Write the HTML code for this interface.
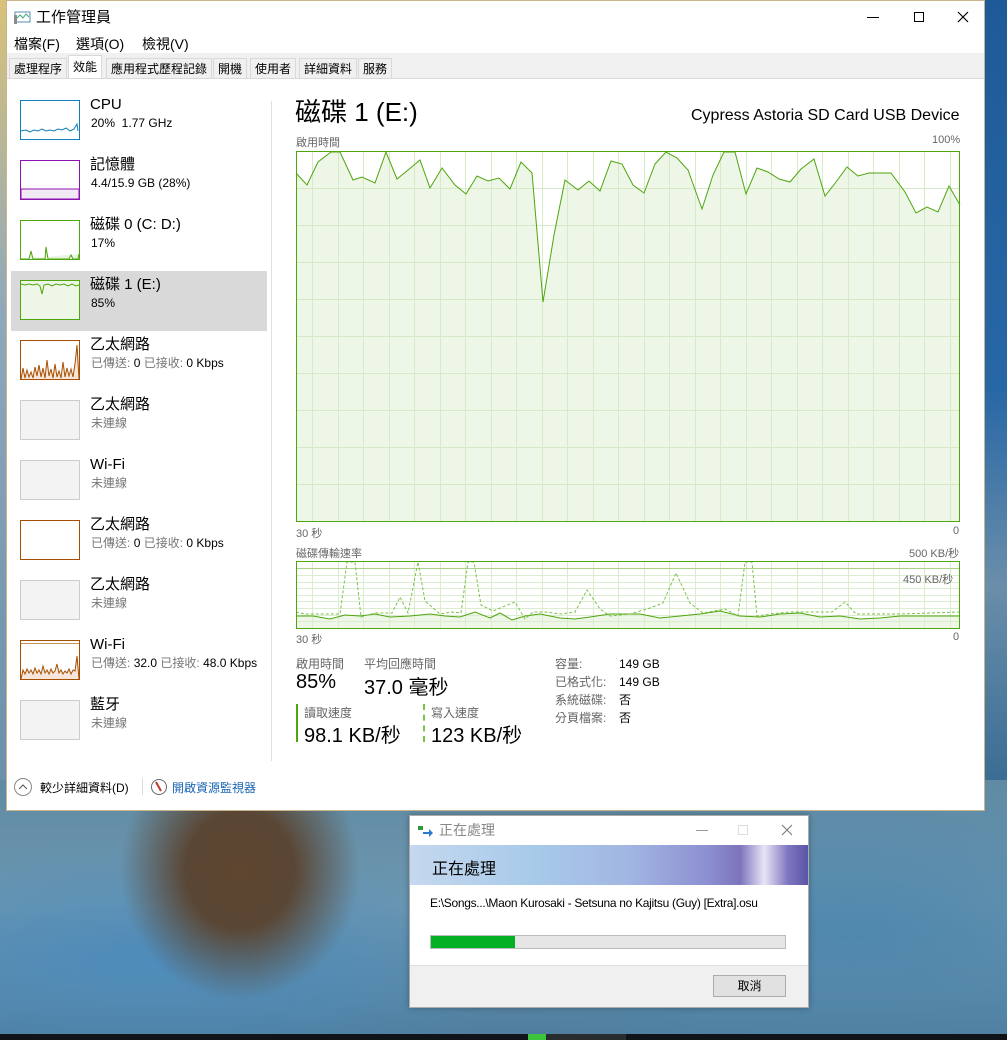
<!DOCTYPE html>
<html><head><meta charset="utf-8">
<style>
*{margin:0;padding:0;box-sizing:border-box}
body{width:1007px;height:1040px;overflow:hidden;position:relative;font-family:"Liberation Sans","Noto Sans CJK TC",sans-serif;color:#000;
background:linear-gradient(180deg,#2c6fae 0%,#3a79a8 60%,#5b8cab 78%,#6d95aa 90%,#4c7d9c 100%)}
.abs{position:absolute}
.bg1{left:0;top:780px;width:1007px;height:255px;background:
radial-gradient(ellipse 120px 130px at 240px 90px,#5e4630 0%,#5a4634 45%,rgba(80,70,60,0) 100%),
radial-gradient(ellipse 400px 120px at 150px 180px,#4e8cbb 0%,rgba(78,140,187,0) 100%),
radial-gradient(ellipse 400px 150px at 850px 150px,#4f87ad 0%,rgba(79,135,173,0) 100%),
linear-gradient(180deg,#5f8aa3,#6f98b0 50%,#4f7e9e)}
.win{left:6px;top:0;width:979px;height:811px;background:#fff;border:1px solid #c9b58a}
.t{white-space:nowrap;position:absolute}
.tab{position:absolute;top:57px;height:20px;font-size:12px;line-height:20px;padding:0 4px;background:#f0f0f0;border:1px solid #d9d9d9;border-bottom:none}
.thumb{position:absolute;left:20px;width:60px;height:40px;border:1px solid #ccc;background:#f3f3f3}
.nm{position:absolute;left:90px;font-size:15px;line-height:18px}
.sb{position:absolute;left:91px;font-size:12px;line-height:14px;color:#444}
.g{color:#777}
.lbl{font-size:12px;color:#666}
</style></head><body>
<div class="abs bg1"></div>
<div class="abs" style="left:985px;top:0;width:22px;height:780px;background:linear-gradient(180deg,#1f5a98,#2867a6 50%,#6a8eaa 75%,#3b6d94)"></div>
<div class="abs" style="left:0;top:0;width:6px;height:780px;background:linear-gradient(180deg,#d9c27a,#8fa8bb 40%,#6c90ab)"></div>

<div class="abs win">
 <svg class="abs" style="left:7px;top:8px" width="18" height="16"><rect x="1" y="3" width="15" height="10" fill="#fff" stroke="#5a8bb5"/><polyline points="2,10 6,6 9,9 12,5 15,8" fill="none" stroke="#3a7" stroke-width="1"/><rect x="0" y="6" width="3" height="9" fill="#8c8c8c"/></svg>
 <div class="t" style="left:29px;top:5px;font-size:15px">工作管理員</div>
 <div class="t" style="left:860px;top:8px;width:12px;border-top:1px solid #000;margin-top:8px"></div>
 <div class="abs" style="left:907px;top:11px;width:10px;height:10px;border:1px solid #000"></div>
 <svg class="abs" style="left:950px;top:10px" width="12" height="12"><path d="M1 1L11 11M11 1L1 11" stroke="#000" stroke-width="1.2"/></svg>
 <div class="t" style="left:7px;top:33px;font-size:14px">檔案(F)</div>
 <div class="t" style="left:69px;top:33px;font-size:14px">選項(O)</div>
 <div class="t" style="left:135px;top:33px;font-size:14px">檢視(V)</div>
 <div class="abs" style="left:0;top:52px;width:977px;height:25px;background:#f0f0f0"></div>
 <div class="tab" style="left:2px">處理程序</div>
 <div class="tab" style="left:61px;top:54px;height:24px;background:#fff;line-height:22px">效能</div>
 <div class="tab" style="left:99px">應用程式歷程記錄</div>
 <div class="tab" style="left:206px">開機</div>
 <div class="tab" style="left:243px">使用者</div>
 <div class="tab" style="left:292px">詳細資料</div>
 <div class="tab" style="left:351px">服務</div>
 <div class="abs" style="left:0;top:77px;width:977px;border-top:1px solid #d9d9d9"></div>
 <div class="abs" style="left:4px;top:270px;width:256px;height:60px;background:#d9d9d9"></div>
 <div class="abs" style="left:264px;top:100px;height:660px;border-left:1px solid #e0e0e0"></div>
</div>

<svg class="abs" style="left:20px;top:100px" width="60" height="40"><rect x="0.5" y="0.5" width="59" height="39" fill="#fff" stroke="#117dbb"/><polyline points="1,31 6,30 10,32 14,30 18,31 22,29 26,31 30,30 34,31 38,29 42,30 46,28 50,31 54,29 57,24 58,31" fill="none" stroke="#117dbb"/></svg>
<div class="nm" style="top:96px">CPU</div><div class="sb" style="top:116px;color:#000">20%&nbsp; 1.77 GHz</div>
<svg class="abs" style="left:20px;top:160px" width="60" height="40"><rect x="0.5" y="0.5" width="59" height="39" fill="#fff" stroke="#8b12ae"/><rect x="1" y="29" width="58" height="10" fill="#f1e9f4" stroke="#8b12ae"/></svg>
<div class="nm" style="top:156px">記憶體</div><div class="sb" style="top:176px;color:#000">4.4/15.9 GB (28%)</div>
<svg class="abs" style="left:20px;top:220px" width="60" height="40"><rect x="0.5" y="0.5" width="59" height="39" fill="#fff" stroke="#4da60c"/><polyline points="1,39 9,39 11,31 13,39 25,39 26,27 28,39 49,39 51,35 53,39 58,39 59,34" fill="#e9f5e0" stroke="#4da60c"/></svg>
<div class="nm" style="top:216px">磁碟 0 (C: D:)</div><div class="sb" style="top:236px;color:#000">17%</div>
<svg class="abs" style="left:20px;top:280px" width="60" height="40"><rect x="0.5" y="0.5" width="59" height="39" fill="#eef6e8" stroke="#4da60c"/><polyline points="1,4 5,5 9,4 13,5 17,4 20,6 22,14 24,5 28,4 32,6 36,4 40,5 44,4 48,6 52,4 56,6 59,5" fill="none" stroke="#4da60c"/></svg>
<div class="nm" style="top:276px">磁碟 1 (E:)</div><div class="sb" style="top:296px;color:#000">85%</div>
<svg class="abs" style="left:20px;top:340px" width="60" height="40"><rect x="0.5" y="0.5" width="59" height="39" fill="#fff" stroke="#a74f01"/><polyline points="1,39 3,28 5,38 7,30 9,37 11,32 13,38 15,27 17,36 19,25 21,37 23,28 25,38 27,20 29,36 31,29 33,38 35,24 37,37 39,31 41,38 43,22 45,37 47,28 49,36 51,29 53,37 55,24 57,5 59,39" fill="#f6e7da" stroke="#a74f01"/></svg>
<div class="nm" style="top:336px">乙太網路</div><div class="sb" style="top:356px"><span class="g">已傳送:</span> <span style="color:#000">0</span> <span class="g">已接收:</span> <span style="color:#000">0 Kbps</span></div>
<div class="thumb" style="top:400px"></div>
<div class="nm" style="top:396px">乙太網路</div><div class="sb g" style="top:416px">未連線</div>
<div class="thumb" style="top:460px"></div>
<div class="nm" style="top:456px">Wi-Fi</div><div class="sb g" style="top:476px">未連線</div>
<div class="thumb" style="top:520px;background:#fff;border-color:#a74f01"></div>
<div class="nm" style="top:516px">乙太網路</div><div class="sb" style="top:536px"><span class="g">已傳送:</span> <span style="color:#000">0</span> <span class="g">已接收:</span> <span style="color:#000">0 Kbps</span></div>
<div class="thumb" style="top:580px"></div>
<div class="nm" style="top:576px">乙太網路</div><div class="sb g" style="top:596px">未連線</div>
<svg class="abs" style="left:20px;top:640px" width="60" height="40"><rect x="0.5" y="0.5" width="59" height="39" fill="#fff" stroke="#a74f01"/><line x1="1" y1="3.5" x2="59" y2="3.5" stroke="#c98f5a"/><polyline points="1,39 3,30 5,34 7,29 9,33 11,30 13,34 15,28 17,33 19,30 21,34 23,26 25,33 27,30 29,34 31,29 33,33 35,31 37,24 39,33 41,30 43,34 45,31 47,33 49,29 51,34 53,30 55,31 57,16 59,39" fill="#f6e7da" stroke="#a74f01"/></svg>
<div class="nm" style="top:636px">Wi-Fi</div><div class="sb" style="top:656px"><span class="g">已傳送:</span> <span style="color:#000">32.0</span> <span class="g">已接收:</span> <span style="color:#000">48.0 Kbps</span></div>
<div class="thumb" style="top:700px"></div>
<div class="nm" style="top:696px">藍牙</div><div class="sb g" style="top:716px">未連線</div>

<div class="t" style="left:295px;top:95px;font-size:26px;line-height:34px">磁碟 1 (E:)</div>
<div class="t" style="left:691px;top:107px;font-size:16px">Cypress Astoria SD Card USB Device</div>
<div class="t lbl" style="left:296px;top:134px;font-size:11px">啟用時間</div>
<div class="t lbl" style="left:932px;top:134px;font-size:11px">100%</div>

<svg class="abs" style="left:295px;top:150px" width="667" height="374">
 <g transform="translate(-295,-150)">
 <rect x="296.5" y="151.5" width="663" height="370" fill="#fff"/>
 <polygon fill="#eef6e8" points="296,522 296,173 307,185 318,162 331,152 340,152 353,180 362,177 375,183 386,152 397,179 408,170 420,160 430,188 442,168 455,185 466,194 477,176 488,181 499,178 510,189 521,162 532,173 543,302 554,235 565,180 578,190 589,181 600,191 611,161 622,164 633,185 644,193 655,164 666,152 677,158 688,170 702,209 713,175 724,152 735,152 746,194 757,168 768,172 779,179 790,182 801,169 814,159 825,196 836,182 847,167 858,176 869,173 891,173 905,192 916,213 927,207 938,212 949,186 960,205 960,522"/>
 <g stroke="#d6eac8" stroke-width="1">
  <line x1="296" y1="188.5" x2="960" y2="188.5"/><line x1="296" y1="225.5" x2="960" y2="225.5"/><line x1="296" y1="262.5" x2="960" y2="262.5"/><line x1="296" y1="299.5" x2="960" y2="299.5"/><line x1="296" y1="336.5" x2="960" y2="336.5"/><line x1="296" y1="373.5" x2="960" y2="373.5"/><line x1="296" y1="410.5" x2="960" y2="410.5"/><line x1="296" y1="447.5" x2="960" y2="447.5"/><line x1="296" y1="484.5" x2="960" y2="484.5"/>
  <line x1="312.5" y1="151" x2="312.5" y2="522"/><line x1="338.5" y1="151" x2="338.5" y2="522"/><line x1="363.5" y1="151" x2="363.5" y2="522"/><line x1="389.5" y1="151" x2="389.5" y2="522"/><line x1="414.5" y1="151" x2="414.5" y2="522"/><line x1="440.5" y1="151" x2="440.5" y2="522"/><line x1="465.5" y1="151" x2="465.5" y2="522"/><line x1="491.5" y1="151" x2="491.5" y2="522"/><line x1="516.5" y1="151" x2="516.5" y2="522"/><line x1="542.5" y1="151" x2="542.5" y2="522"/><line x1="567.5" y1="151" x2="567.5" y2="522"/><line x1="593.5" y1="151" x2="593.5" y2="522"/><line x1="618.5" y1="151" x2="618.5" y2="522"/><line x1="644.5" y1="151" x2="644.5" y2="522"/><line x1="669.5" y1="151" x2="669.5" y2="522"/><line x1="695.5" y1="151" x2="695.5" y2="522"/><line x1="720.5" y1="151" x2="720.5" y2="522"/><line x1="746.5" y1="151" x2="746.5" y2="522"/><line x1="771.5" y1="151" x2="771.5" y2="522"/><line x1="797.5" y1="151" x2="797.5" y2="522"/><line x1="822.5" y1="151" x2="822.5" y2="522"/><line x1="848.5" y1="151" x2="848.5" y2="522"/><line x1="873.5" y1="151" x2="873.5" y2="522"/><line x1="899.5" y1="151" x2="899.5" y2="522"/><line x1="924.5" y1="151" x2="924.5" y2="522"/><line x1="950.5" y1="151" x2="950.5" y2="522"/>
 </g>
 <polyline fill="none" stroke="#4da60c" stroke-width="1" points="296,173 307,185 318,162 331,152 340,152 353,180 362,177 375,183 386,152 397,179 408,170 420,160 430,188 442,168 455,185 466,194 477,176 488,181 499,178 510,189 521,162 532,173 543,302 554,235 565,180 578,190 589,181 600,191 611,161 622,164 633,185 644,193 655,164 666,152 677,158 688,170 702,209 713,175 724,152 735,152 746,194 757,168 768,172 779,179 790,182 801,169 814,159 825,196 836,182 847,167 858,176 869,173 891,173 905,192 916,213 927,207 938,212 949,186 960,205"/>
 <rect x="296.5" y="151.5" width="663" height="370" fill="none" stroke="#4da60c"/>
 </g>
</svg>
<div class="t lbl" style="left:296px;top:525px;font-size:11px">30 秒</div>
<div class="t lbl" style="left:953px;top:525px;font-size:11px">0</div>
<div class="t lbl" style="left:296px;top:545px;font-size:11px">磁碟傳輸速率</div>
<div class="t lbl" style="left:909px;top:545px;font-size:11px">500 KB/秒</div>

<svg class="abs" style="left:295px;top:560px" width="667" height="70">
 <g transform="translate(-295,-560)">
 <rect x="296.5" y="561.5" width="663" height="67" fill="#fff"/>
 <polygon fill="#eef6e8" points="296,628 296,616 313,616 330,619 345,615 360,616 375,614 390,617 410,616 430,614 445,616 460,617 475,612 490,618 500,613 512,620 525,616 540,614 560,618 575,619 590,617 610,614 640,614 660,618 680,616 700,614 720,611 740,616 760,617 780,614 800,613 820,617 840,616 860,619 880,618 900,616 920,616 960,616 960,628"/>
 <g stroke="#dcecd0">
  <line x1="296" y1="575.5" x2="960" y2="575.5"/><line x1="296" y1="582.5" x2="960" y2="582.5"/><line x1="296" y1="588.5" x2="960" y2="588.5"/><line x1="296" y1="595.5" x2="960" y2="595.5"/><line x1="296" y1="601.5" x2="960" y2="601.5"/><line x1="296" y1="608.5" x2="960" y2="608.5"/><line x1="296" y1="615.5" x2="960" y2="615.5"/><line x1="296" y1="621.5" x2="960" y2="621.5"/>
  <line x1="312.5" y1="561" x2="312.5" y2="628"/><line x1="338.5" y1="561" x2="338.5" y2="628"/><line x1="363.5" y1="561" x2="363.5" y2="628"/><line x1="389.5" y1="561" x2="389.5" y2="628"/><line x1="414.5" y1="561" x2="414.5" y2="628"/><line x1="440.5" y1="561" x2="440.5" y2="628"/><line x1="465.5" y1="561" x2="465.5" y2="628"/><line x1="491.5" y1="561" x2="491.5" y2="628"/><line x1="516.5" y1="561" x2="516.5" y2="628"/><line x1="542.5" y1="561" x2="542.5" y2="628"/><line x1="567.5" y1="561" x2="567.5" y2="628"/><line x1="593.5" y1="561" x2="593.5" y2="628"/><line x1="618.5" y1="561" x2="618.5" y2="628"/><line x1="644.5" y1="561" x2="644.5" y2="628"/><line x1="669.5" y1="561" x2="669.5" y2="628"/><line x1="695.5" y1="561" x2="695.5" y2="628"/><line x1="720.5" y1="561" x2="720.5" y2="628"/><line x1="746.5" y1="561" x2="746.5" y2="628"/><line x1="771.5" y1="561" x2="771.5" y2="628"/><line x1="797.5" y1="561" x2="797.5" y2="628"/><line x1="822.5" y1="561" x2="822.5" y2="628"/><line x1="848.5" y1="561" x2="848.5" y2="628"/><line x1="873.5" y1="561" x2="873.5" y2="628"/><line x1="899.5" y1="561" x2="899.5" y2="628"/><line x1="924.5" y1="561" x2="924.5" y2="628"/><line x1="950.5" y1="561" x2="950.5" y2="628"/>
 </g>
 <line x1="296" y1="568.5" x2="960" y2="568.5" stroke="#a8d48a"/>
 <polyline fill="none" stroke="#4da60c" points="296,616 313,616 330,619 345,615 360,616 375,614 390,617 410,616 430,614 445,616 460,617 475,612 490,618 500,613 512,620 525,616 540,614 560,618 575,619 590,617 610,614 640,614 660,618 680,616 700,614 720,611 740,616 760,617 780,614 800,613 820,617 840,616 860,619 880,618 900,616 920,616 960,616"/>
 <polyline fill="none" stroke="#7cc24a" stroke-dasharray="3,2" points="296,612 305,614 320,614 340,614 347,562 355,562 361,617 375,613 392,613 400,597 408,613 418,562 425,601 440,614 452,612 461,613 468,562 474,562 481,605 493,611 505,606 515,602 525,619 533,612 545,612 561,614 575,612 587,590 600,609 610,616 630,614 650,608 663,603 676,573 690,603 703,613 725,609 738,616 745,562 752,562 757,616 770,614 790,612 810,612 832,612 845,602 856,614 870,614 900,614 930,613 960,612"/>
 <rect x="296.5" y="561.5" width="663" height="67" fill="none" stroke="#4da60c"/>
 </g>
</svg>
<div class="t lbl" style="left:903px;top:571px;font-size:11px">450 KB/秒</div>
<div class="t lbl" style="left:296px;top:631px;font-size:11px">30 秒</div>
<div class="t lbl" style="left:953px;top:631px;font-size:11px">0</div>

<div class="t lbl" style="left:296px;top:655px">啟用時間</div>
<div class="t lbl" style="left:364px;top:655px">平均回應時間</div>
<div class="t" style="left:296px;top:671px;font-size:20px">85%</div>
<div class="t" style="left:364px;top:671px;font-size:20px">37.0 毫秒</div>
<div class="abs" style="left:296px;top:704px;height:38px;border-left:2px solid #4da60c"></div>
<div class="abs" style="left:423px;top:704px;height:38px;border-left:2px dashed #7cc24a"></div>
<div class="t lbl" style="left:304px;top:704px">讀取速度</div>
<div class="t lbl" style="left:431px;top:704px">寫入速度</div>
<div class="t" style="left:304px;top:719px;font-size:20px">98.1 KB/秒</div>
<div class="t" style="left:431px;top:719px;font-size:20px">123 KB/秒</div>
<div class="t lbl" style="left:555px;top:655px;line-height:18px">容量:<br>已格式化:<br>系統磁碟:<br>分頁檔案:</div>
<div class="t" style="left:619px;top:655px;font-size:12px;line-height:18px">149 GB<br>149 GB<br>否<br>否</div>

<div class="abs" style="left:14px;top:778px;width:18px;height:18px;border:1px solid #888;border-radius:50%"></div>
<svg class="abs" style="left:18px;top:783px" width="10" height="8"><path d="M1 6L5 2L9 6" fill="none" stroke="#555"/></svg>
<div class="t" style="left:40px;top:779px;font-size:12px">較少詳細資料(D)</div>
<div class="abs" style="left:142px;top:778px;height:17px;border-left:1px solid #ddd"></div>
<svg class="abs" style="left:150px;top:778px" width="18" height="18"><circle cx="9" cy="9" r="7.5" fill="#fff" stroke="#666"/><path d="M6 4L11 13" stroke="#c0392b" stroke-width="2"/></svg>
<div class="t" style="left:172px;top:779px;font-size:12px;color:#1a64b4">開啟資源監視器</div>

<div class="abs" style="left:409px;top:815px;width:400px;height:193px;background:#fff;border:1px solid #aaa;box-shadow:0 0 6px rgba(0,0,0,.3)"></div>
<svg class="abs" style="left:418px;top:824px" width="16" height="14"><rect x="0" y="2" width="5" height="4" fill="#2a9a3a"/><path d="M5 8H11V5L15 9L11 13V10H5Z" fill="#2a78d0"/></svg>
<div class="t" style="left:439px;top:820px;font-size:14px;color:#888">正在處理</div>
<div class="abs" style="left:696px;top:830px;width:12px;border-top:1px solid #999"></div>
<div class="abs" style="left:738px;top:825px;width:10px;height:10px;border:1px solid #ddd"></div>
<svg class="abs" style="left:781px;top:824px" width="12" height="12"><path d="M1 1L11 11M11 1L1 11" stroke="#777"/></svg>
<div class="abs" style="left:410px;top:845px;width:398px;height:40px;background:linear-gradient(90deg,#c5d8ee 0%,#a8cbea 30%,#a2b6e2 55%,#8c8fd0 75%,#7c74bc 83%,#e8e4f6 89%,#7e76c0 95%,#5a55a6 100%)"></div>
<div class="t" style="left:432px;top:855px;font-size:16px">正在處理</div>
<div class="t" style="left:430px;top:896px;font-size:12px;letter-spacing:-0.3px">E:\Songs...\Maon Kurosaki - Setsuna no Kajitsu (Guy) [Extra].osu</div>
<div class="abs" style="left:430px;top:935px;width:356px;height:14px;background:#e6e6e6;border:1px solid #bcbcbc"></div>
<div class="abs" style="left:431px;top:936px;width:84px;height:12px;background:#06b025"></div>
<div class="abs" style="left:410px;top:965px;width:398px;height:42px;background:#f0f0f0;border-top:1px solid #dfdfdf"></div>
<div class="abs" style="left:713px;top:975px;width:73px;height:22px;background:#e1e1e1;border:1px solid #adadad;font-size:12px;text-align:center;line-height:20px">取消</div>

<div class="abs" style="left:0;top:1034px;width:1007px;height:6px;background:#101418"></div>
<div class="abs" style="left:528px;top:1034px;width:18px;height:6px;background:#3cc43c"></div>
<div class="abs" style="left:546px;top:1034px;width:80px;height:6px;background:#2a2d30"></div>
</body></html>
